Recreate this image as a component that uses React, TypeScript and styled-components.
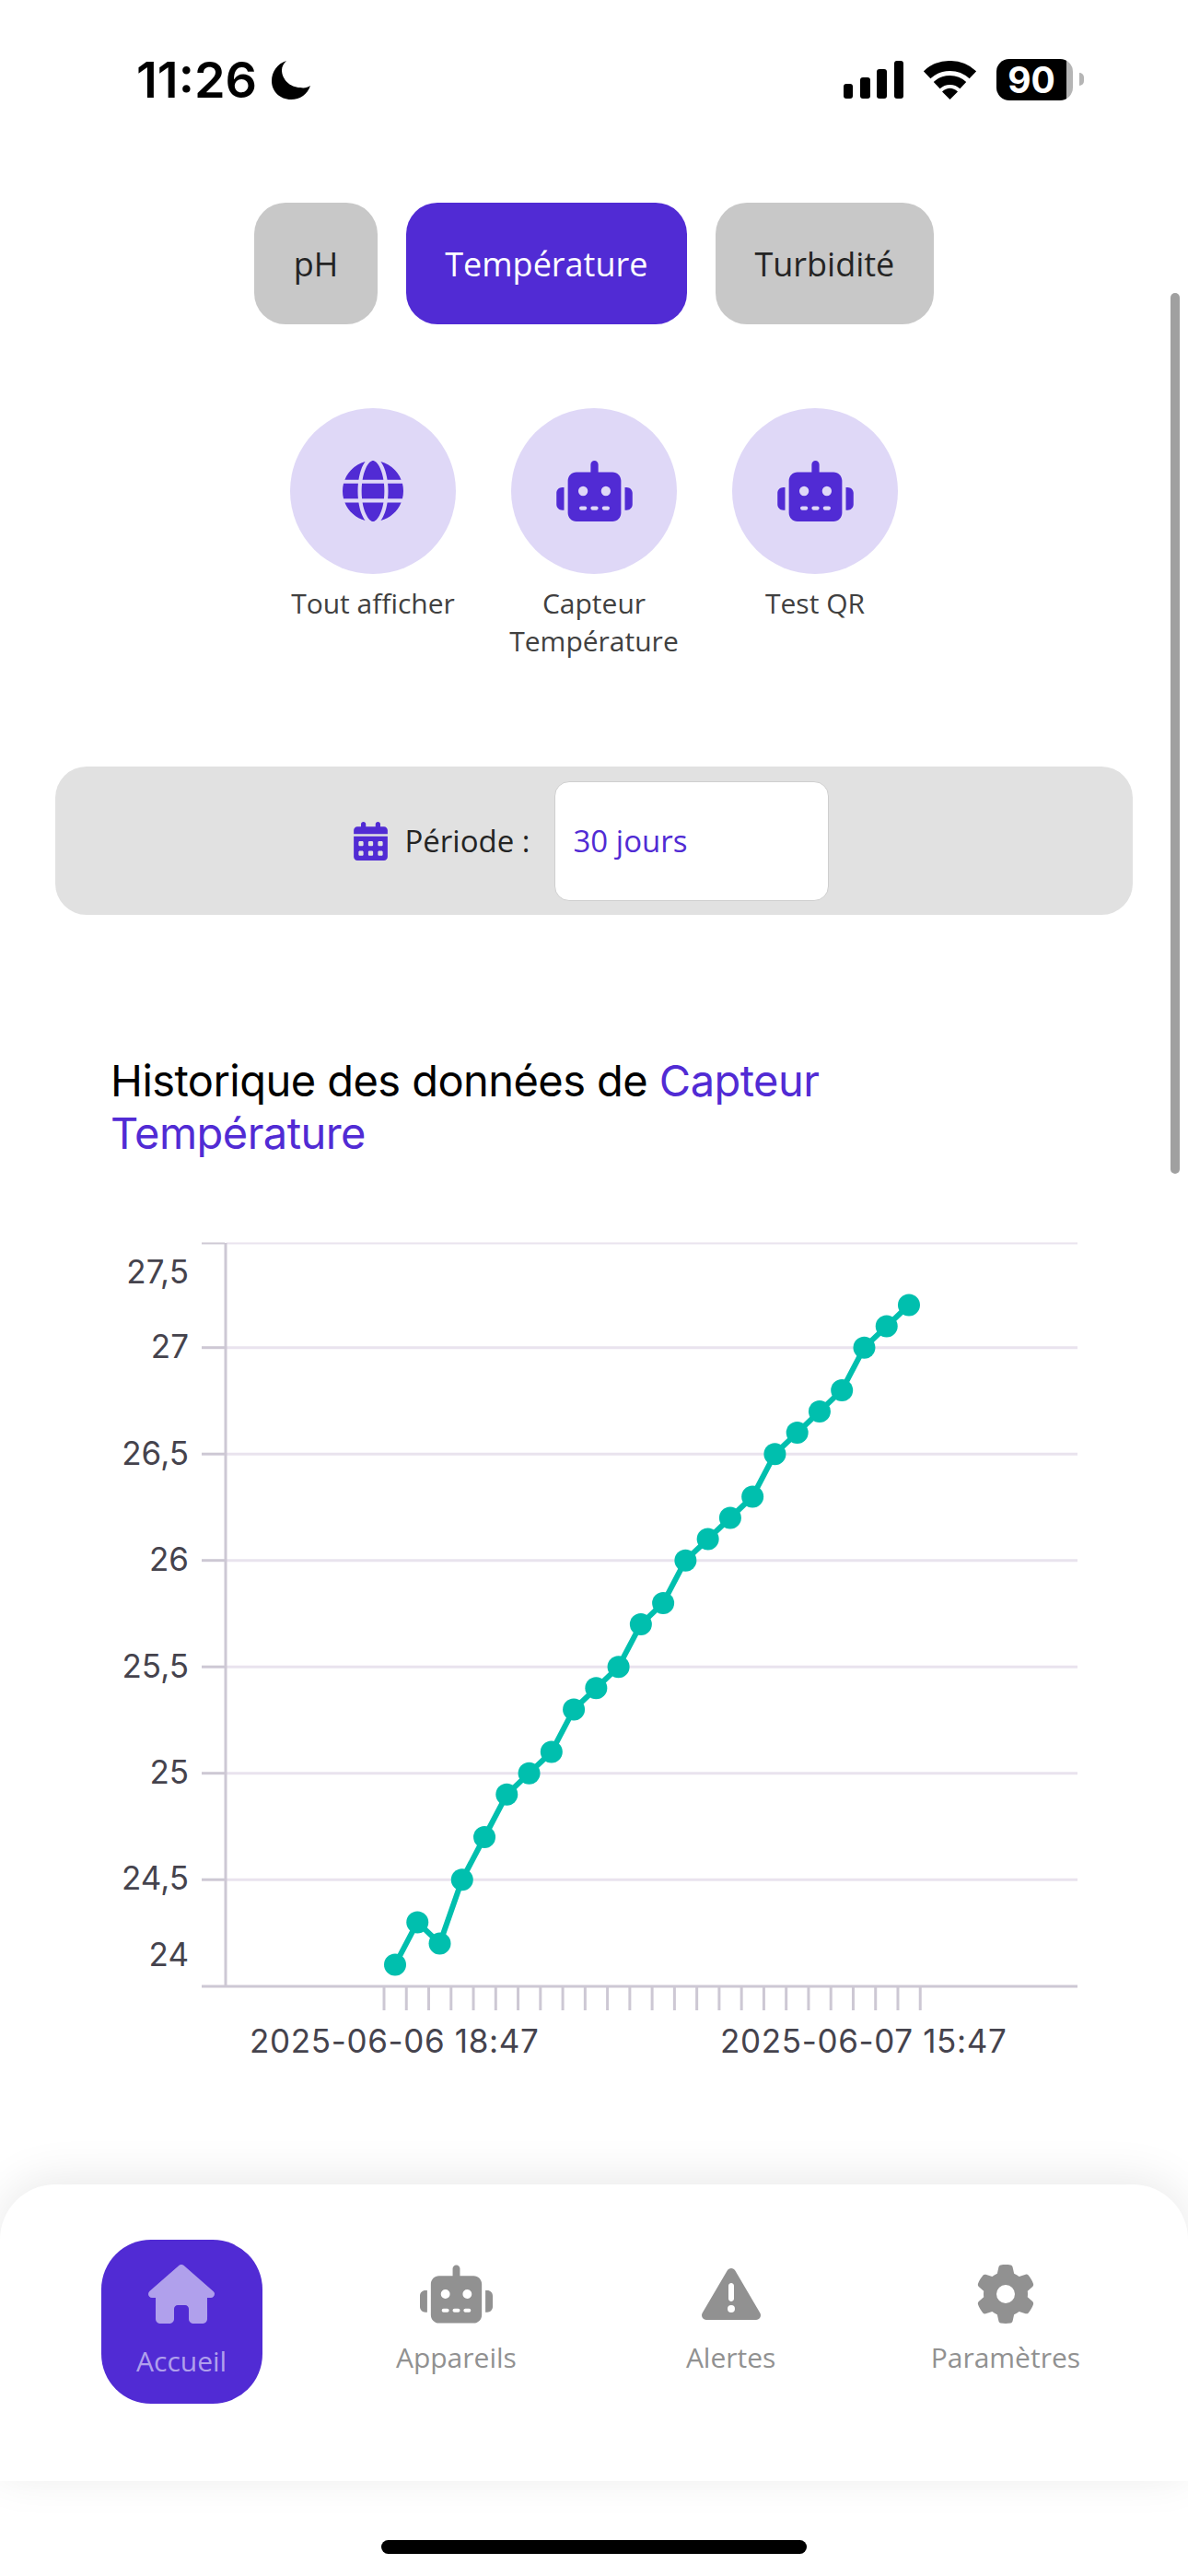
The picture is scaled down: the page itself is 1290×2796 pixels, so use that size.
import styled, { createGlobalStyle } from 'styled-components';
import { FaCalendarDays, FaGear, FaGlobe, FaHouse, FaRobot, FaTriangleExclamation } from 'react-icons/fa6';

const PURPLE = '#512bd4';

const GlobalStyle = createGlobalStyle`
  html, body {
    margin: 0;
    padding: 0;
    background: #ffffff;
  }
`;

const Screen = styled.div`
  position: relative;
  width: 1290px;
  height: 2796px;
  overflow: hidden;
  background: #ffffff;
  display: flex;
  flex-direction: column;
  font-family: 'Open Sans', sans-serif;
`;

const StatusBar = styled.div`
  display: flex;
  align-items: center;
  justify-content: space-between;
  height: 45px;
  margin-top: 64px;
  padding: 0 125px 0 148px;
`;

const StatusLeft = styled.div`
  display: flex;
  align-items: center;
  gap: 16px;
`;

const Clock = styled.span`
  font-family: Inter, sans-serif;
  font-size: 54px;
  font-weight: 600;
  letter-spacing: 0;
  color: #000000;
  line-height: 45px;
`;

const StatusRight = styled.div`
  display: flex;
  align-items: center;
  gap: 22px;
`;

const Battery = styled.div`
  position: relative;
  display: flex;
  align-items: center;
  justify-content: center;
  width: 83px;
  height: 45px;
  padding-right: 7px;
  box-sizing: border-box;
  border-radius: 14px;
  background: linear-gradient(to right, #000000 76px, #b5b5b5 76px);
  color: #ffffff;
  font-family: Inter, sans-serif;
  font-size: 39px;
  font-weight: 700;

  &::after {
    content: '';
    position: absolute;
    right: -12px;
    top: 15px;
    width: 5px;
    height: 14px;
    border-radius: 0 7px 7px 0;
    background: #b5b5b5;
  }
`;

const TabRow = styled.div`
  display: flex;
  justify-content: center;
  gap: 31px;
  margin-top: 111px;
`;

const Tab = styled.div<{ $active?: boolean }>`
  display: flex;
  align-items: center;
  height: 132px;
  padding: 0 42.5px;
  border-radius: 34px;
  font-size: 36px;
  background: ${(p) => (p.$active ? PURPLE : '#c8c8c8')};
  color: ${(p) => (p.$active ? '#ffffff' : '#242424')};
`;

const SensorRow = styled.div`
  display: flex;
  justify-content: center;
  margin-top: 91px;
`;

const Sensor = styled.div`
  display: flex;
  flex-direction: column;
  align-items: center;
  width: 240px;
`;

const SensorCircle = styled.div<{ $iconWidth: number }>`
  display: flex;
  align-items: center;
  justify-content: center;
  width: 180px;
  height: 180px;
  border-radius: 50%;
  background: #dfd8f7;
  color: ${PURPLE};

  svg {
    width: ${(p) => p.$iconWidth}px;
    height: 66px;
  }
`;

const SensorLabel = styled.div`
  width: 200px;
  height: 82px;
  margin-top: 11px;
  font-size: 30px;
  line-height: 41px;
  text-align: center;
  color: #404040;
`;

const PeriodBar = styled.div`
  display: flex;
  align-items: center;
  justify-content: center;
  width: 1170px;
  height: 161px;
  margin: 116px 0 0 60px;
  padding-right: 6px;
  box-sizing: border-box;
  border-radius: 34px;
  background: #e1e1e1;
`;

const PeriodIcon = styled.span`
  display: flex;
  color: ${PURPLE};
  margin-right: 18px;

  svg {
    width: 37px;
    height: 42px;
  }
`;

const PeriodLabel = styled.span`
  font-size: 33px;
  color: #242424;
  margin-right: 26px;
`;

const PeriodSelect = styled.div`
  display: flex;
  align-items: center;
  width: 298px;
  height: 130px;
  padding-left: 20px;
  box-sizing: border-box;
  border: 1px solid #cfcfcf;
  border-radius: 16px;
  background: #ffffff;
  font-size: 33px;
  color: ${PURPLE};
`;

const ChartTitle = styled.div`
  width: 1000px;
  margin: 151px 0 0 120px;
  font-family: Inter, sans-serif;
  font-size: 47px;
  letter-spacing: -0.55px;
  line-height: 57px;
  color: #000000;

  span {
    color: ${PURPLE};
  }
`;

const ChartSvg = styled.svg`
  display: block;
  margin-top: 82px;
`;

const BottomNav = styled.div`
  position: absolute;
  left: 0;
  right: 0;
  top: 2371px;
  height: 322px;
  box-sizing: border-box;
  padding: 60px 49px 0 48px;
  display: grid;
  grid-template-columns: repeat(4, 1fr);
  align-items: start;
  justify-items: center;
  border-radius: 60px 60px 0 0;
  background: #ffffff;
  box-shadow: 0 -6px 50px rgba(0, 0, 0, 0.09);
`;

const NavItem = styled.div<{ $active?: boolean }>`
  display: flex;
  flex-direction: column;
  align-items: center;
  box-sizing: border-box;
  width: 175px;
  height: 178px;
  padding-top: 27px;
  border-radius: 54px;
  background: ${(p) => (p.$active ? PURPLE : 'transparent')};
  color: ${(p) => (p.$active ? '#b0a0ec' : '#919191')};
`;

const NavIcon = styled.div<{ $width: number }>`
  display: flex;
  align-items: center;
  justify-content: center;
  height: 64px;

  svg {
    width: ${(p) => p.$width}px;
    height: 64px;
  }
`;

const NavLabel = styled.div<{ $active?: boolean }>`
  margin-top: ${(p) => (p.$active ? '20px' : '16px')};
  font-size: 30px;
  line-height: 41px;
  white-space: nowrap;
`;

const ScrollThumb = styled.div`
  position: absolute;
  left: 1271px;
  top: 318px;
  width: 10px;
  height: 956px;
  border-radius: 5px;
  background: #a0a0a0;
`;

const HomeIndicator = styled.div`
  position: absolute;
  left: 414px;
  top: 2757px;
  width: 462px;
  height: 15px;
  border-radius: 8px;
  background: #000000;
`;

const values = [
  24.1, 24.3, 24.2, 24.5, 24.7, 24.9, 25, 25.1, 25.3, 25.4, 25.5, 25.7, 25.8, 26, 26.1, 26.2, 26.3, 26.5, 26.6, 26.7,
  26.8, 27, 27.1, 27.2,
];

const yOf = (v: number) => 1693.7 - (v - 26) * 231;
const xOf = (i: number) => 429 + i * 24.26;

const gridLines = [27.49, 27, 26.5, 26, 25.5, 25, 24.5];
const yLabels = [
  { text: '27,5', y: 1393 },
  { text: '27', y: 1474 },
  { text: '26,5', y: 1590 },
  { text: '26', y: 1705 },
  { text: '25,5', y: 1821 },
  { text: '25', y: 1936 },
  { text: '24,5', y: 2051 },
  { text: '24', y: 2134 },
];

function Chart() {
  const line = values.map((v, i) => `${xOf(i)},${yOf(v)}`).join(' ');
  return (
    <ChartSvg width="1290" height="900" viewBox="0 1340 1290 900">
      {gridLines.map((v, i) => (
        <g key={v}>
          <line x1="246" x2="1170" y1={yOf(v)} y2={yOf(v)} stroke="#e9e3ee" strokeWidth={i === 0 ? 2 : 3} />
          <line x1="219" x2="244" y1={yOf(v)} y2={yOf(v)} stroke="#cdc8d4" strokeWidth={i === 0 ? 2 : 3} />
        </g>
      ))}
      <line x1="245" x2="245" y1="1349" y2="2157" stroke="#cdc8d4" strokeWidth="3" />
      <line x1="219" x2="1170" y1="2156" y2="2156" stroke="#cdc8d4" strokeWidth="3" />
      {Array.from({ length: 25 }, (_, i) => (
        <line key={i} x1={417 + i * 24.26} x2={417 + i * 24.26} y1="2157" y2="2182" stroke="#cdc8d4" strokeWidth="3" />
      ))}
      <polyline points={line} fill="none" stroke="#00bfae" strokeWidth="6" />
      {values.map((v, i) => (
        <circle key={i} cx={xOf(i)} cy={yOf(v)} r="12" fill="#00bfae" />
      ))}
      <g fontFamily="Inter, sans-serif" fontSize="35" fill="#45434d">
        {yLabels.map((l) => (
          <text key={l.text} x="205" y={l.y} textAnchor="end">
            {l.text}
          </text>
        ))}
        <text x="271" y="2228" letterSpacing="0.65">
          2025-06-06 18:47
        </text>
        <text x="782" y="2228" letterSpacing="0.65">
          2025-06-07 15:47
        </text>
      </g>
    </ChartSvg>
  );
}

export default function App() {
  return (
    <Screen>
      <GlobalStyle />
      <StatusBar>
        <StatusLeft>
          <Clock>11:26</Clock>
          <svg width="42" height="42" viewBox="0 0 42 42">
            <path d="M16 0C6 3 0 12 0 22c0 11 9 20 21 20 10 0 18-6 21-15-3 2-7 3-11 2C20 29 11 20 11 10c0-4 2-7 5-10z" />
          </svg>
        </StatusLeft>
        <StatusRight>
          <svg width="65" height="41" viewBox="0 0 65 41">
            <rect x="0" y="25" width="10" height="16" rx="3" />
            <rect x="18" y="18" width="11" height="23" rx="3" />
            <rect x="36" y="9" width="11" height="32" rx="3" />
            <rect x="55" y="0" width="10" height="41" rx="3" />
          </svg>
          <svg width="57" height="42" viewBox="0 0 57 42">
            <path d="M3.6 15.3A36.5 36.5 0 0 1 53.4 15.3" fill="none" stroke="#000" strokeWidth="11" />
            <path d="M14.2 26.6A21 21 0 0 1 42.8 26.6" fill="none" stroke="#000" strokeWidth="10" />
            <path d="M28.5 42L20 33.5Q28.5 26 37 33.5Z" />
          </svg>
          <Battery>90</Battery>
        </StatusRight>
      </StatusBar>

      <TabRow>
        <Tab>pH</Tab>
        <Tab $active>Température</Tab>
        <Tab>Turbidité</Tab>
      </TabRow>

      <SensorRow>
        <Sensor>
          <SensorCircle $iconWidth={66}>
            <FaGlobe />
          </SensorCircle>
          <SensorLabel>Tout afficher</SensorLabel>
        </Sensor>
        <Sensor>
          <SensorCircle $iconWidth={83}>
            <FaRobot />
          </SensorCircle>
          <SensorLabel>Capteur Température</SensorLabel>
        </Sensor>
        <Sensor>
          <SensorCircle $iconWidth={83}>
            <FaRobot />
          </SensorCircle>
          <SensorLabel>Test QR</SensorLabel>
        </Sensor>
      </SensorRow>

      <PeriodBar>
        <PeriodIcon>
          <FaCalendarDays />
        </PeriodIcon>
        <PeriodLabel>Période :</PeriodLabel>
        <PeriodSelect>30 jours</PeriodSelect>
      </PeriodBar>

      <ChartTitle>
        Historique des données de <span>Capteur Température</span>
      </ChartTitle>

      <Chart />

      <BottomNav>
        <NavItem $active>
          <NavIcon $width={76}>
            <FaHouse />
          </NavIcon>
          <NavLabel $active>Accueil</NavLabel>
        </NavItem>
        <NavItem>
          <NavIcon $width={79}>
            <FaRobot />
          </NavIcon>
          <NavLabel>Appareils</NavLabel>
        </NavItem>
        <NavItem>
          <NavIcon $width={64}>
            <FaTriangleExclamation />
          </NavIcon>
          <NavLabel>Alertes</NavLabel>
        </NavItem>
        <NavItem>
          <NavIcon $width={64}>
            <FaGear />
          </NavIcon>
          <NavLabel>Paramètres</NavLabel>
        </NavItem>
      </BottomNav>

      <ScrollThumb />
      <HomeIndicator />
    </Screen>
  );
}
